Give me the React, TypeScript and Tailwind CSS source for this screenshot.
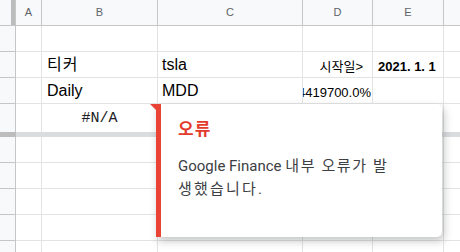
const cellFont = { fontFamily: '"Liberation Sans", "Noto Sans CJK KR", sans-serif' };

const cols = ['A', 'B', 'C', 'D', 'E'];

function HeaderRow() {
  return (
    <div className="flex h-[26px] bg-[#f8f9fa] border-b border-[#c4c7c5] text-[11px] text-[#5f6368]" style={cellFont}>
      <div className="w-[16px] shrink-0 flex justify-end border-r border-[#c4c7c5]">
        <div className="w-[4px] h-full bg-[#bdbdbd]" />
      </div>
      {cols.map((c, i) => (
        <div
          key={c}
          className={`shrink-0 flex items-center justify-center border-r border-[#c4c7c5] ${
            ['w-[26px]', 'w-[116px]', 'w-[145px]', 'w-[70px]', 'w-[71px]'][i]
          }`}
        >
          {c}
        </div>
      ))}
      <div className="flex-1" />
    </div>
  );
}

function Row({
  b,
  c,
  d,
  e,
  height = 'h-[26px]',
  last,
}: {
  b?: React.ReactNode;
  c?: React.ReactNode;
  d?: React.ReactNode;
  e?: React.ReactNode;
  height?: string;
  last?: boolean;
}) {
  const line = last ? '' : 'border-b';
  return (
    <div className={`flex ${height}`} style={cellFont}>
      <div className={`w-[16px] shrink-0 bg-[#f8f9fa] border-r border-[#c4c7c5] ${line} border-b-[#c4c7c5]`} />
      <div className={`w-[26px] shrink-0 border-r border-[#e2e3e3] ${line} border-b-[#e2e3e3]`} />
      <div className={`w-[116px] shrink-0 relative border-r border-[#e2e3e3] ${line} border-b-[#e2e3e3]`}>{b}</div>
      <div className={`w-[145px] shrink-0 border-r border-[#e2e3e3] ${line} border-b-[#e2e3e3]`}>{c}</div>
      <div className={`w-[70px] shrink-0 overflow-hidden border-r border-[#e2e3e3] ${line} border-b-[#e2e3e3]`}>{d}</div>
      <div className={`w-[71px] shrink-0 border-r border-[#e2e3e3] ${line} border-b-[#e2e3e3]`}>{e}</div>
      <div className={`flex-1 ${line} border-b-[#e2e3e3]`} />
    </div>
  );
}

function Text({ children, className = '' }: { children: React.ReactNode; className?: string }) {
  return (
    <div className={`h-full flex items-end pb-[3px] text-black whitespace-nowrap ${className}`}>
      <span className="block">{children}</span>
    </div>
  );
}

export default function App() {
  return (
    <div className="relative w-[460px] h-[252px] overflow-hidden bg-white">
      <HeaderRow />
      <Row />
      <Row
        b={<Text className="pl-[5px] text-[16px] leading-[18px] tracking-[1px]">티커</Text>}
        c={<Text className="pl-[4px] text-[16px] leading-[18px]">tsla</Text>}
        d={<Text className="justify-end pr-[9px] text-[13px] leading-[15px]">시작일&gt;</Text>}
        e={<Text className="pl-[5px] text-[13px] leading-[15px] font-bold">2021. 1. 1</Text>}
      />
      <Row
        b={<Text className="pl-[5px] text-[16px] leading-[18px]">Daily</Text>}
        c={<Text className="pl-[4px] text-[16px] leading-[18px]">MDD</Text>}
        d={<Text className="justify-end pr-[1px] text-[13px] leading-[15px]">4419700.0%</Text>}
      />
      <Row
        height="h-[28px]"
        last
        b={
          <>
            <div
              className="h-full flex items-end justify-center pb-[4px] text-[15px] leading-[18px] text-[#202124]"
              style={{ fontFamily: '"Liberation Mono", monospace' }}
            >
              #N/A
            </div>
            <svg className="absolute top-0 right-0" width="7" height="7" viewBox="0 0 7 7">
              <polygon points="0,0 7,0 7,7" fill="#ea4335" />
            </svg>
          </>
        }
      />
      <div className="flex h-[5px]">
        <div className="w-[16px] shrink-0 bg-[#bdbdbd]" />
        <div className="flex-1 bg-[#dadce0]" />
      </div>
      <Row />
      <Row />
      <Row />
      <Row />
      <Row />

      <div className="absolute left-[156px] top-[104px] w-[286px] h-[133px] flex bg-white rounded-r-[5px] shadow-[2px_4px_8px_rgba(60,64,67,0.3)]">
        <div className="w-[5px] shrink-0 bg-[#ea4335]" />
        <div
          className="pl-[17px] pt-[13px]"
          style={{ fontFamily: 'Roboto, "Noto Sans CJK KR", sans-serif' }}
        >
          <div className="text-[17px] leading-[24px] font-bold text-[#e33b2e] tracking-[1px]">오류</div>
          <div className="mt-[14px] text-[15px] leading-[23px] text-[#3c4043] whitespace-nowrap">
            Google Finance <span className="tracking-[1.6px]">내부 오류가 발</span>
            <br />
            <span className="tracking-[2.2px]">생했습니다.</span>
          </div>
        </div>
      </div>
    </div>
  );
}
